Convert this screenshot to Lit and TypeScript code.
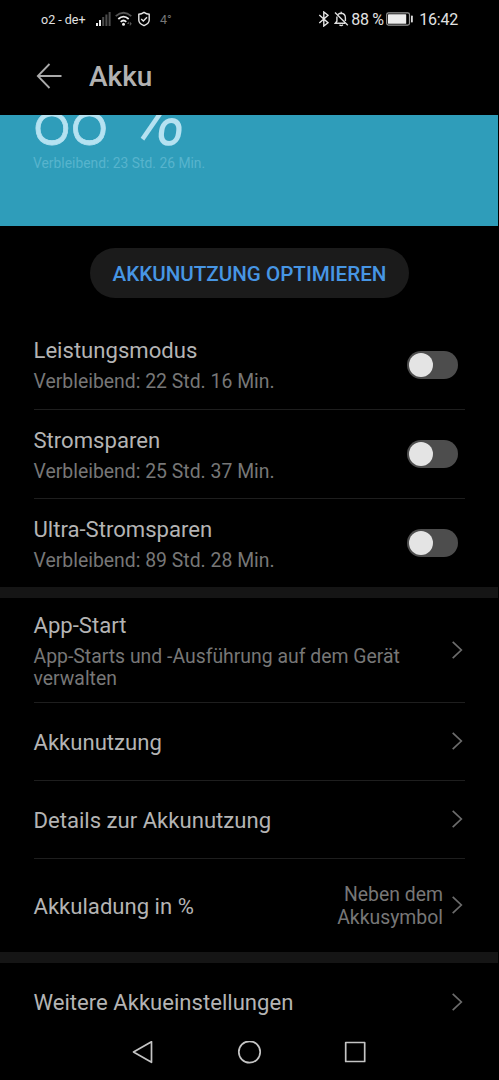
import { LitElement, html, css } from "lit";
import { customElement, property } from "lit/decorators.js";

const chevron = html`<svg class="chev" width="12" height="20" viewBox="0 0 12 20"><path d="M1.7 1.9 10.3 10 1.7 18.1" fill="none" stroke="#6c6c6c" stroke-width="1.7"/></svg>`;

@customElement("status-bar")
class StatusBar extends LitElement {
  static styles = css`
    :host { display: flex; height: 38px; padding: 0 41px 0 41px; justify-content: space-between; align-items: center; color: #e2e2e2; box-sizing: border-box; }
    .side { display: flex; align-items: center; height: 38px; }
    .net { font-size: 12.5px; width: 54px; white-space: nowrap; }
    .deg { font-size: 12.5px; color: #777; margin-left: 9px; }
    .pct { font-size: 16px; margin-left: 2px; width: 33px; white-space: nowrap; letter-spacing: -0.25px; }
    .time { font-size: 16px; margin-left: 5px; letter-spacing: -0.2px; }
    .gap { margin-left: 3px; }
    .bell { margin-left: 4px; }
    .cell { margin-left: 2px; }
  `;
  render() {
    return html`
      <div class="side">
        <span class="net">o2 - de+</span>
        <svg width="16" height="16" viewBox="0 0 16 16"><g fill="#eee"><rect x="1" y="12" width="2" height="3"/><rect x="4" y="9" width="2" height="6"/></g><g fill="#4c4c4c"><rect x="7.2" y="6" width="2" height="9"/><rect x="10.4" y="3.5" width="2" height="11.5"/><rect x="13.6" y="1" width="2" height="14"/></g></svg>
        <svg class="gap" width="20" height="16" viewBox="0 0 20 16"><g fill="none" stroke-width="1.8"><path d="M1.7 5.2Q9.5-1.7 17.3 5.2" stroke="#555"/><path d="M4.3 8Q9.5 3.3 14.7 8M6.7 10.8Q9.5 8.3 12.3 10.8" stroke="#eee"/></g><circle cx="9.5" cy="13.3" r="1.5" fill="#eee"/><path d="M15 10.5 12.8 13H15zM15.8 10.5V15l2-2.3z" fill="#555"/></svg>
        <svg class="gap" width="14" height="16" viewBox="0 0 14 16"><path d="M7 1.4Q9.5 3.1 12.2 3.3V9.2Q12 12.5 7 14.7Q2 12.5 1.8 9.2V3.3Q4.5 3.1 7 1.4ZM4.2 8 6.3 10 10 6.3" fill="none" stroke="#e6e6e6" stroke-width="1.4"/></svg>
        <span class="deg">4°</span>
      </div>
      <div class="side">
        <svg width="12" height="16" viewBox="0 0 12 16"><path d="M1.3 4 10 11.8 5.8 15V1L10 4.2 1.3 12" fill="none" stroke="#e6e6e6" stroke-width="1.4"/></svg>
        <svg class="bell" width="15" height="16" viewBox="0 0 15 16"><path d="M4.1 3.5Q5.3 2.3 7.2 2.3Q11.4 2.6 11.4 7V10M2.9 5.5V10.3L1.4 12.2H11M7.2 2.3V.8M5.5 13.8Q7.2 15.5 8.9 13.8M1 1.5 13.8 14.2" fill="none" stroke="#dedede" stroke-width="1.4"/></svg>
        <span class="pct">88 %</span>
        <svg class="cell" width="28" height="14" viewBox="0 0 28 14"><rect x=".7" y=".9" width="22.8" height="12.2" rx="1.8" fill="none" stroke="#999" stroke-width="1.2"/><rect x="2" y="2.2" width="18.2" height="9.6" rx=".6" fill="#ececec"/><rect x="25" y="3.5" width="1.8" height="7" rx=".7" fill="#ddd"/></svg>
        <span class="time">16:42</span>
      </div>`;
  }
}

@customElement("setting-row")
class SettingRow extends LitElement {
  @property() label = "";
  @property() sub = "";
  @property() value = "";
  @property() kind = "link";
  static styles = css`
    :host { display: flex; flex: none; box-sizing: border-box; margin: 0 34px 0 33.5px; align-items: center; justify-content: space-between; }
    :host([line]) { border-bottom: 1px solid #1e1e1e; }
    .text { padding-top: 1px; }
    .label { font-size: 22.1px; line-height: 26px; color: #b4b4b4; white-space: nowrap; }
    .sub { font-size: 19.4px; line-height: 22.5px; color: #777; margin: 8px 0 -1px; max-width: 385px; }
    .end { display: flex; align-items: center; gap: 8px; margin-right: 2px; }
    .value { font-size: 19.4px; line-height: 22.5px; color: #777; text-align: right; width: 120px; padding-top: 3px; }
    .switch { width: 51px; height: 28px; border-radius: 14px; background: #4d4d4d; padding: 2px; box-sizing: border-box; margin-right: 7px; }
    .knob { width: 24px; height: 24px; border-radius: 50%; background: #e4e4e4; }
    .chev { display: block; }
  `;
  render() {
    return html`
      <div class="text"><div class="label">${this.label}</div>${this.sub ? html`<div class="sub">${this.sub}</div>` : ""}</div>
      ${this.kind === "switch"
        ? html`<div class="switch"><div class="knob"></div></div>`
        : html`<div class="end">${this.value ? html`<div class="value">${this.value}</div>` : ""}${chevron}</div>`}`;
  }
}

@customElement("app-root")
class AppRoot extends LitElement {
  static styles = css`
    :host { display: flex; flex-direction: column; width: 499px; height: 1080px; background: #000; font-family: Roboto, sans-serif; overflow: hidden; }
    header { height: 77px; display: flex; align-items: center; padding: 0 36px 1px; box-sizing: border-box; gap: 27px; }
    h1 { margin: 0; font-size: 28px; font-weight: 500; color: #b2b2b2; line-height: 34px; padding-top: 2px; }
    .hero { height: 111px; flex: none; margin-right: 1px; background: #2f9dba; overflow: hidden; padding: 0 33px; box-sizing: border-box; }
    .big { display: block; }
    .remain { font-size: 13.85px; line-height: 18px; color: #57b4cd; margin-top: 2px; }
    .action { height: 94px; flex: none; display: flex; justify-content: center; padding-top: 22px; box-sizing: border-box; }
    .pill { width: 319px; height: 50px; border-radius: 25px; background: #1b1b1b; color: #4796e4; font: 500 20.6px/52px Roboto, sans-serif; border: 0; padding: 0; white-space: nowrap; }
    .band { background: #151515; margin-right: 1px; height: 11px; flex: none; }
    .r0 { height: 90px; } .r1 { height: 89px; } .rz { height: 88px; }
    .r2 { height: 105px; } .r3 { height: 78px; } .r4 { height: 93px; }
    .r3, .r4 { padding-bottom: 1px; }
    nav { height: 39px; flex: none; }
    nav svg { display: block; }
  `;
  render() {
    return html`
      <status-bar></status-bar>
      <header>
        <svg width="26" height="26" viewBox="0 0 26 26"><path d="M25.5 13H1.8M13.5 1 1.8 13 13.5 25" fill="none" stroke="#aaa" stroke-width="1.8"/></svg>
        <h1>Akku</h1>
      </header>
      <section class="hero">
        <svg class="big" width="170" height="37" viewBox="0 0 170 37"><g fill="#b5e2f1" stroke="#b5e2f1" font-family="Roboto"><text x="-.8 43.2" y="29.3" font-size="83" font-weight="300" stroke-width=".9" transform="scale(.85 1)">88</text><text x="0" y="0" font-size="84" font-weight="400" stroke="none" transform="translate(94 30) skewX(-7) scale(.91 1)">%</text></g></svg>
        <div class="remain">Verbleibend: 23 Std. 26 Min.</div>
      </section>
      <div class="action"><button class="pill">AKKUNUTZUNG OPTIMIEREN</button></div>
      <setting-row class="r0" line kind="switch" label="Leistungsmodus" sub="Verbleibend: 22 Std. 16 Min."></setting-row>
      <setting-row class="r1" line kind="switch" label="Stromsparen" sub="Verbleibend: 25 Std. 37 Min."></setting-row>
      <setting-row class="rz" kind="switch" label="Ultra-Stromsparen" sub="Verbleibend: 89 Std. 28 Min."></setting-row>
      <div class="band"></div>
      <setting-row class="r2" line label="App-Start" sub="App-Starts und -Ausführung auf dem Gerät verwalten"></setting-row>
      <setting-row class="r3" line label="Akkunutzung"></setting-row>
      <setting-row class="r3" line label="Details zur Akkunutzung"></setting-row>
      <setting-row class="r4" label="Akkuladung in %" value="Neben dem Akkusymbol"></setting-row>
      <div class="band"></div>
      <setting-row class="r3" label="Weitere Akkueinstellungen"></setting-row>
      <nav><svg width="499" height="39" viewBox="0 1 499 39"><g fill="none" stroke="#c4c4c4" stroke-width="1.7" stroke-linejoin="round"><path d="M133.5 12 151.5 1.7V22.3Z"/><circle cx="249.5" cy="12" r="10.7"/><rect x="345.7" y="2.5" width="19" height="19"/></g></svg></nav>`;
  }
}
